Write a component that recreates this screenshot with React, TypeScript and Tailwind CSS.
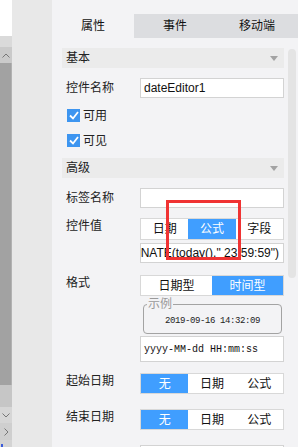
import React from "react";

const FONT = "font-['Liberation_Sans','Noto_Sans_CJK_SC',sans-serif]";

function SectionHeader({ title }: { title: string }) {
  return (
    <div className="flex h-[20px] items-center justify-between bg-[#ebebeb] pl-[4px] pr-[6px]">
      <span className="text-[12px] leading-none text-[#222]">{title}</span>
      <svg width="8" height="5" viewBox="0 0 8 5">
        <path d="M0 0 L8 0 L4 5 Z" fill="#a3a3a3" />
      </svg>
    </div>
  );
}

function Row({
  label,
  children,
  className = "",
  seg = false,
}: {
  label?: string;
  children: React.ReactNode;
  className?: string;
  seg?: boolean;
}) {
  return (
    <div className={`flex shrink-0 items-center ${className}`}>
      <div
        className={`w-[78px] shrink-0 pl-[4px] text-[12px] leading-none text-[#222] ${seg ? "pb-[6px]" : ""}`}
      >
        {label}
      </div>
      {children}
    </div>
  );
}

function Input({
  children,
  className = "text-[12px]",
}: {
  children?: React.ReactNode;
  className?: string;
}) {
  return (
    <div
      className={`flex h-full w-[144px] items-center overflow-hidden whitespace-nowrap border border-[#d3d3d3] bg-white px-[3px] text-[#111] ${className}`}
    >
      {children}
    </div>
  );
}

function Segmented({ items, active }: { items: string[]; active: number }) {
  return (
    <div className="flex h-full w-[144px] border border-[#d8d8d8] bg-white">
      {items.map((it, i) => (
        <div
          key={it}
          className={`flex flex-1 items-center justify-center text-[12px] leading-none ${
            i === active ? "bg-[#409eff] text-white" : "text-[#111]"
          }`}
        >
          {it}
        </div>
      ))}
    </div>
  );
}

function Check({ label, className = "" }: { label: string; className?: string }) {
  return (
    <div className={`flex h-[13px] shrink-0 items-center pl-[5px] ${className}`}>
      <div className="flex h-[13px] w-[13px] items-center justify-center bg-[#3d95f0]">
        <svg width="10" height="9" viewBox="0 0 10 9">
          <path d="M1 4.5 L4 7.5 L9 1" stroke="#fff" strokeWidth="1.8" fill="none" />
        </svg>
      </div>
      <span className="ml-[3px] text-[12px] leading-none text-[#222]">{label}</span>
    </div>
  );
}

function LeftStrip() {
  return (
    <div className="flex w-[12px] shrink-0 flex-col">
      <div className="h-[36px] shrink-0 bg-white" />
      <div className="h-[11px] shrink-0 bg-[#dadada]" />
      <div className="flex h-[16px] shrink-0 items-center justify-center bg-[#cacaca]">
        <svg width="8" height="5" viewBox="0 0 8 5">
          <path d="M0.5 4.5 L4 1 L7.5 4.5" stroke="#777" fill="none" />
        </svg>
      </div>
      <div className="h-[322px] shrink-0 border-r border-[#b2b2b2] bg-[#a2a2a2]" />
      <div className="h-[22px] shrink-0 bg-[#c6c6c6]" />
      <div className="flex h-[16px] shrink-0 items-center justify-center bg-[#d6d6d6]">
        <svg width="8" height="5" viewBox="0 0 8 5">
          <path d="M0.5 0.5 L4 4 L7.5 0.5" stroke="#777" fill="none" />
        </svg>
      </div>
      <div className="flex h-[17px] shrink-0 items-center justify-center bg-[#cfcfcf]">
        <svg width="5" height="8" viewBox="0 0 5 8">
          <path d="M0.5 0.5 L4 4 L0.5 7.5" stroke="#777" fill="none" />
        </svg>
      </div>
      <div className="flex-1 bg-[#d4d4d4] pl-[1px] pt-[4px]">
        <div className="h-[3px] w-[2px] bg-[#3b5bdb]" />
      </div>
    </div>
  );
}

export default function App() {
  return (
    <div className={`flex h-[447px] w-[298px] overflow-hidden bg-[#f3f3f5] ${FONT}`}>
      <LeftStrip />
      <div className="w-[40px] shrink-0 bg-[#e8e8e8]" />
      <div className="relative flex w-[246px] flex-col overflow-hidden pt-[14px]">
        {/* tabs */}
        <div className="flex h-[24px] shrink-0 text-[12px] text-[#111]">
          <div className="flex w-[82px] items-center justify-center bg-[#f3f3f5]">属性</div>
          <div className="flex w-[82px] items-center justify-center bg-[#dcdde0]">事件</div>
          <div className="flex w-[82px] items-center justify-center bg-[#dcdde0]">移动端</div>
        </div>

        <div className="flex shrink-0">
          <div className="ml-[10px] flex w-[222px] flex-col">
            <div className="mt-[10px]">
              <SectionHeader title="基本" />
            </div>
            <Row label="控件名称" className="mt-[10px] h-[20px]">
              <Input>dateEditor1</Input>
            </Row>
            <Check label="可用" className="mt-[11px]" />
            <Check label="可见" className="mt-[12px]" />
            <div className="mt-[11px]">
              <SectionHeader title="高级" />
            </div>
            <Row label="标签名称" className="mt-[10px] h-[20px]">
              <Input />
            </Row>
            <Row label="控件值" seg className="mt-[10px] h-[22px]">
              <Segmented items={["日期", "公式", "字段"]} active={1} />
            </Row>
            <Row className="mt-[3px] h-[20px]">
              <Input className="justify-end pr-[4px] text-[12px]">
                <span className="shrink-0">=CONCATENATE(today()," 23:59:59")</span>
              </Input>
            </Row>
            <Row label="格式" seg className="mt-[12px] h-[21px]">
              <Segmented items={["日期型", "时间型"]} active={1} />
            </Row>
            <div className="mt-[2px] flex shrink-0">
              <div className="w-[81px] shrink-0" />
              <fieldset className="h-[36px] w-[139px] rounded-[4px] border border-[#a3a3a3]">
                <legend className="ml-[3px] px-[1px] text-[12px] leading-[12px] text-[#9a9a9a]">示例</legend>
                <div className="h-[22px] text-center font-['Liberation_Mono',monospace] text-[9px] font-medium leading-[22px] tracking-[-0.4px] text-[#222]">
                  2019-09-16 14:32:09
                </div>
              </fieldset>
            </div>
            <Row className="mt-[2px] h-[26px]">
              <Input className="font-['Liberation_Mono',monospace] text-[10px]">
                yyyy-MM-dd HH:mm:ss
              </Input>
            </Row>
            <Row label="起始日期" seg className="mt-[11px] h-[21px]">
              <Segmented items={["无", "日期", "公式"]} active={0} />
            </Row>
            <Row label="结束日期" seg className="mt-[15px] h-[21px]">
              <Segmented items={["无", "日期", "公式"]} active={0} />
            </Row>
            <Row className="mt-[15px] h-[20px]">
              <Input />
            </Row>
          </div>
          {/* scrollbar */}
          <div className="ml-[4px] mt-[11px] h-[229px] w-[8px] rounded-full bg-[#e4e4e4]" />
        </div>

        {/* red highlight annotation */}
        <div className="absolute left-[114px] top-[200px] h-[60px] w-[75px] border-[3px] border-[#f03333]" />
      </div>
    </div>
  );
}
